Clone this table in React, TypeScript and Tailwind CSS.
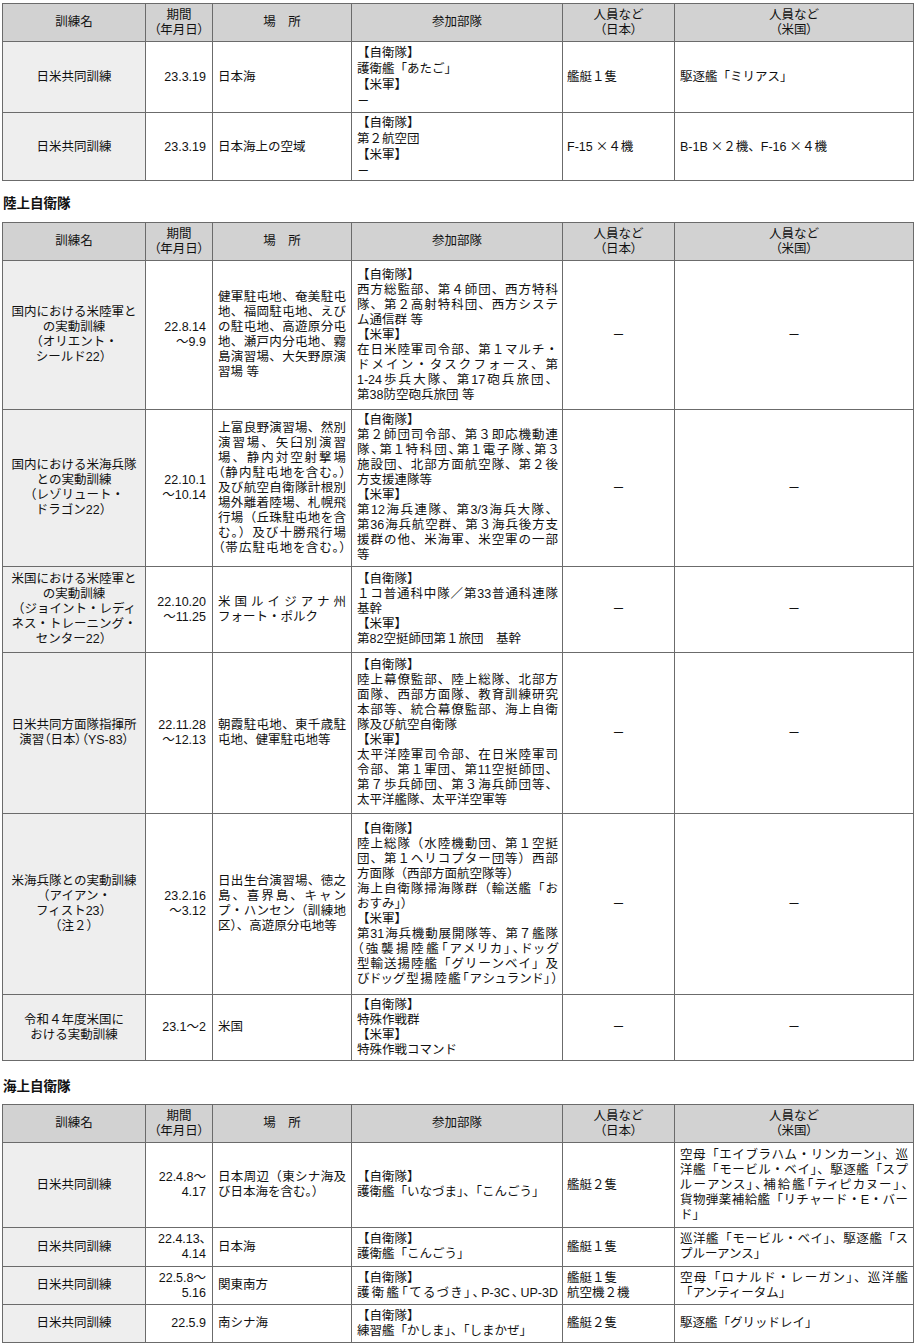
import React from "react";

// Line prefixes: "J:" justified line, "K:" justified + proportional punctuation, "P:" proportional punctuation only
type Row = { h: string; c: string[][] };

const header: string[][] = [
  ["訓練名"],
  ["期間", "P:（年月日）"],
  ["場　所"],
  ["参加部隊"],
  ["人員など", "P:（日本）"],
  ["人員など", "P:（米国）"],
];

const airRows: Row[] = [
  {
    h: "h-[71px]",
    c: [
      ["日米共同訓練"],
      ["23.3.19"],
      ["日本海"],
      ["【自衛隊】", "護衛艦「あたご」", "【米軍】", "－"],
      ["艦艇１隻"],
      ["駆逐艦「ミリアス」"],
    ],
  },
  {
    h: "h-[68px]",
    c: [
      ["日米共同訓練"],
      ["23.3.19"],
      ["日本海上の空域"],
      ["【自衛隊】", "第２航空団", "【米軍】", "－"],
      ["F-15×４機"],
      ["B-1B×２機、F-16×４機"],
    ],
  },
];

const groundRows: Row[] = [
  {
    h: "h-[149px]",
    c: [
      ["国内における米陸軍と", "の実動訓練", "（オリエント・", "シールド22）"],
      ["22.8.14", "～9.9"],
      [
        "J:健軍駐屯地、奄美駐屯",
        "J:地、福岡駐屯地、えび",
        "J:の駐屯地、高遊原分屯",
        "J:地、瀬戸内分屯地、霧",
        "J:島演習場、大矢野原演",
        "習場 等",
      ],
      [
        "【自衛隊】",
        "J:西方総監部、第４師団、西方特科",
        "J:隊、第２高射特科団、西方システ",
        "ム通信群 等",
        "【米軍】",
        "J:在日米陸軍司令部、第１マルチ・",
        "J:ドメイン・タスクフォース、第",
        "J:1-24歩兵大隊、第17砲兵旅団、",
        "第38防空砲兵旅団 等",
      ],
      ["－"],
      ["－"],
    ],
  },
  {
    h: "h-[157px]",
    c: [
      ["国内における米海兵隊", "との実動訓練", "（レゾリュート・", "ドラゴン22）"],
      ["22.10.1", "～10.14"],
      [
        "J:上富良野演習場、然別",
        "J:演習場、矢臼別演習",
        "J:場、静内対空射撃場",
        "K:（静内駐屯地を含む。）",
        "J:及び航空自衛隊計根別",
        "J:場外離着陸場、札幌飛",
        "J:行場（丘珠駐屯地を含",
        "J:む。）及び十勝飛行場",
        "K:（帯広駐屯地を含む。）",
      ],
      [
        "【自衛隊】",
        "J:第２師団司令部、第３即応機動連",
        "K:隊、第１特科団、第１電子隊、第３",
        "J:施設団、北部方面航空隊、第２後",
        "方支援連隊等",
        "【米軍】",
        "J:第12海兵連隊、第3/3海兵大隊、",
        "J:第36海兵航空群、第３海兵後方支",
        "J:援群の他、米海軍、米空軍の一部",
        "等",
      ],
      ["－"],
      ["－"],
    ],
  },
  {
    h: "h-[86px]",
    c: [
      ["米国における米陸軍と", "の実動訓練", "（ジョイント・レディ", "ネス・トレーニング・", "センター22）"],
      ["22.10.20", "～11.25"],
      ["J:米国ルイジアナ州", "フォート・ポルク"],
      ["【自衛隊】", "J:１コ普通科中隊／第33普通科連隊", "基幹", "【米軍】", "第82空挺師団第１旅団　基幹"],
      ["－"],
      ["－"],
    ],
  },
  {
    h: "h-[161px]",
    c: [
      ["日米共同方面隊指揮所", "P:演習（日本）（YS-83）"],
      ["22.11.28", "～12.13"],
      ["J:朝霞駐屯地、東千歳駐", "屯地、健軍駐屯地等"],
      [
        "【自衛隊】",
        "J:陸上幕僚監部、陸上総隊、北部方",
        "J:面隊、西部方面隊、教育訓練研究",
        "J:本部等、統合幕僚監部、海上自衛",
        "隊及び航空自衛隊",
        "【米軍】",
        "J:太平洋陸軍司令部、在日米陸軍司",
        "J:令部、第１軍団、第11空挺師団、",
        "J:第７歩兵師団、第３海兵師団等、",
        "太平洋艦隊、太平洋空軍等",
      ],
      ["－"],
      ["－"],
    ],
  },
  {
    h: "h-[181px]",
    c: [
      ["米海兵隊との実動訓練", "（アイアン・", "フィスト23）", "（注２）"],
      ["23.2.16", "～3.12"],
      [
        "J:日出生台演習場、徳之",
        "J:島、喜界島、キャン",
        "J:プ・ハンセン（訓練地",
        "区）、高遊原分屯地等",
      ],
      [
        "【自衛隊】",
        "J:陸上総隊（水陸機動団、第１空挺",
        "J:団、第１ヘリコプター団等）西部",
        "方面隊（西部方面航空隊等）",
        "J:海上自衛隊掃海隊群（輸送艦「お",
        "おすみ」）",
        "【米軍】",
        "J:第31海兵機動展開隊等、第７艦隊",
        "K:（強襲揚陸艦「アメリカ」、ドッグ",
        "J:型輸送揚陸艦「グリーンベイ」及",
        "K:びドッグ型揚陸艦「アシュランド」）",
      ],
      ["－"],
      ["－"],
    ],
  },
  {
    h: "h-[66px]",
    c: [
      ["令和４年度米国に", "おける実動訓練"],
      ["23.1～2"],
      ["米国"],
      ["【自衛隊】", "特殊作戦群", "【米軍】", "特殊作戦コマンド"],
      ["－"],
      ["－"],
    ],
  },
];

const seaRows: Row[] = [
  {
    h: "h-[85px]",
    c: [
      ["日米共同訓練"],
      ["22.4.8～", "4.17"],
      ["J:日本周辺（東シナ海及", "び日本海を含む。）"],
      ["【自衛隊】", "護衛艦「いなづま」、「こんごう」"],
      ["艦艇２隻"],
      [
        "J:空母「エイブラハム・リンカーン」、巡",
        "J:洋艦「モービル・ベイ」、駆逐艦「スプ",
        "K:ルーアンス」、補給艦「ティピカヌー」、",
        "J:貨物弾薬補給艦「リチャード・E・バー",
        "ド」",
      ],
    ],
  },
  {
    h: "h-[39px]",
    c: [
      ["日米共同訓練"],
      ["P:22.4.13、", "4.14"],
      ["日本海"],
      ["【自衛隊】", "護衛艦「こんごう」"],
      ["艦艇１隻"],
      ["J:巡洋艦「モービル・ベイ」、駆逐艦「ス", "プルーアンス」"],
    ],
  },
  {
    h: "h-[38px]",
    c: [
      ["日米共同訓練"],
      ["22.5.8～", "5.16"],
      ["関東南方"],
      ["【自衛隊】", "K:護衛艦「てるづき」、P-3C、UP-3D"],
      ["艦艇１隻", "航空機２機"],
      ["J:空母「ロナルド・レーガン」、巡洋艦", "「アンティータム」"],
    ],
  },
  {
    h: "h-[38px]",
    c: [
      ["日米共同訓練"],
      ["22.5.9"],
      ["南シナ海"],
      ["【自衛隊】", "練習艦「かしま」、「しまかぜ」"],
      ["艦艇２隻"],
      ["駆逐艦「グリッドレイ」"],
    ],
  },
];

function Line({ text }: { text: string }) {
  let cls = "";
  let t = text;
  if (t.startsWith("J:")) {
    cls = "[text-align-last:justify]";
    t = t.slice(2);
  } else if (t.startsWith("K:")) {
    cls = "[text-align-last:justify] [font-feature-settings:'palt']";
    t = t.slice(2);
  } else if (t.startsWith("P:")) {
    cls = "[font-feature-settings:'palt']";
    t = t.slice(2);
  }
  const parts = t.split("×");
  return (
    <div className={cls}>
      {parts.map((p, i) => (
        <React.Fragment key={i}>
          {i > 0 && <span className="pl-[3px] font-['Noto_Sans_CJK_JP',sans-serif]">×</span>}
          {p}
        </React.Fragment>
      ))}
    </div>
  );
}

const colWidths = ["w-[143px]", "w-[67px]", "w-[139px]", "w-[211px]", "w-[112px]", "w-[239px]"];

function cellClass(i: number, centerRight: boolean) {
  switch (i) {
    case 0:
      return "bg-[#eeeeee] px-[4px] text-center";
    case 1:
      return "pl-[2px] pr-[6px] text-right";
    case 2:
      return "pl-[5px] pr-[5px] text-left";
    case 3:
      return "pl-[5px] pr-[4px] text-left";
    case 4:
      return centerRight ? "px-[4px] text-center" : "pl-[4px] pr-[4px] text-left";
    default:
      return centerRight ? "px-[5px] text-center" : "pl-[5px] pr-[5px] text-left";
  }
}

function DataTable({ rows, centerRight = false, lead = "leading-[15px]" }: { rows: Row[]; centerRight?: boolean; lead?: string }) {
  return (
    <table className="w-[911px] table-fixed border-collapse">
      <colgroup>
        {colWidths.map((w) => (
          <col key={w} className={w} />
        ))}
      </colgroup>
      <thead>
        <tr className="h-[38px]">
          {header.map((lines, i) => (
            <th
              key={i}
              className="border border-[#6b6b6b] bg-[#d2d2d2] px-[2px] text-center align-middle font-normal leading-[15px]"
            >
              {lines.map((l, j) => (
                <Line key={j} text={l} />
              ))}
            </th>
          ))}
        </tr>
      </thead>
      <tbody>
        {rows.map((row, r) => (
          <tr key={r} className={row.h}>
            {row.c.map((lines, i) => (
              <td key={i} className={`border border-[#6b6b6b] py-0 align-middle ${lead} ${cellClass(i, centerRight)}`}>
                {lines.map((l, j) => (
                  <Line key={j} text={l} />
                ))}
              </td>
            ))}
          </tr>
        ))}
      </tbody>
    </table>
  );
}

export default function App() {
  return (
    <div className="min-h-[1343px] w-[916px] bg-white pl-[2px] pt-[3px] font-['Liberation_Sans','Noto_Sans_CJK_JP',sans-serif] text-[12.5px] text-[#111111]">
      <DataTable rows={airRows} lead="leading-[16px]" />
      <h2 className="mt-[13px] mb-[8px] h-[20px] pl-[1px] text-[13.5px] leading-[20px] font-bold">陸上自衛隊</h2>
      <DataTable rows={groundRows} centerRight />
      <h2 className="mt-[16px] mb-[7px] h-[20px] pl-[1px] text-[13.5px] leading-[20px] font-bold">海上自衛隊</h2>
      <DataTable rows={seaRows} />
    </div>
  );
}
